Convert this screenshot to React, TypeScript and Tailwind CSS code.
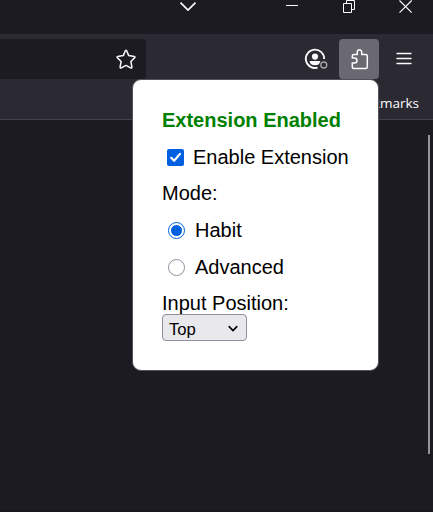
import React from "react";

function TitleBar() {
  return (
    <header className="flex h-[34px] items-start bg-[#1c1b22] text-[#fbfbfe]">
      <svg className="ml-[179px] h-[14px] w-[18px]" viewBox="0 0 18 14" fill="none" stroke="currentColor" strokeWidth="1.7">
        <path d="M1.5 2.7 9 10l7.5-7.3" />
      </svg>
      <svg className="ml-[88px] h-[14px] w-[14px]" viewBox="0 0 14 14" fill="none" stroke="currentColor">
        <path d="M1 5.5h12" />
      </svg>
      <svg className="ml-[43px] h-[14px] w-[14px]" viewBox="0 0 14 14" fill="none" stroke="currentColor">
        <path d="M1.5 3.5h8v9h-8zM4.5 3.5V.5h8v9h-3" />
      </svg>
      <svg className="ml-[42px] h-[14px] w-[15px]" viewBox="0 0 15 14" fill="none" stroke="currentColor" strokeWidth="1.15">
        <path d="M1.5 .5 13.7 12.7M13.7 .5 1.5 12.7" />
      </svg>
    </header>
  );
}

function NavBar() {
  return (
    <nav className="flex h-[50px] items-start bg-[#2b2a33] pt-[5px] text-[#fbfbfe]">
      <div className="flex h-10 w-[146px] items-center justify-end rounded-r bg-[#1c1b22] pr-[10px]">
        <svg className="h-5 w-5" viewBox="0 0 20 20" fill="none" stroke="currentColor" strokeWidth="1.5" strokeLinejoin="round">
          <path d="M9.3 1.8Q10 .6 10.7 1.8L12.7 6.6 18.3 7.4Q19.5 7.7 18.6 8.7L14.9 12.6 15.9 17.8Q16 19.3 14.7 18.8L10 16.4 5.3 18.8Q4 19.3 4.1 17.8L5.1 12.6 1.4 8.7Q.5 7.7 1.7 7.4L7.3 6.6Z" />
        </svg>
      </div>
      <svg className="ml-[158px] mt-[9px] h-[22px] w-6" viewBox="0 0 24 22" fill="none">
        <path d="M20.2 11A9.2 9.2 0 1 0 13.6 19.6" stroke="currentColor" strokeWidth="1.8" />
        <circle cx="11" cy="8.6" r="3.1" fill="currentColor" />
        <path d="M5.7 13h10.6q-.3 4.3-5.3 4.3t-5.3-4.3Z" fill="currentColor" />
        <circle cx="19.8" cy="17" r="4.6" fill="#2b2a33" />
        <circle cx="19.8" cy="17" r="3" stroke="#a5a5aa" strokeWidth="1.3" />
      </svg>
      <div className="ml-[11px] flex h-10 w-10 items-center justify-center rounded bg-[#6a6972]">
        <svg className="h-[22px] w-[22px]" viewBox="0 0 22 22" fill="none" stroke="currentColor" strokeWidth="1.5" strokeLinejoin="round">
          <path d="M4.300 10V8Q4.300 6.500 5.800 6.500H9.300V4a2.200 2.200 0 0 1 4.400 0V6.500h4Q19.300 6.500 19.300 8v10.900q0 1.500-1.500 1.500h-12Q4.300 20.400 4.300 18.900V15h2.200a2.200 2.200 0 0 0 0-5Z" />
        </svg>
      </div>
      <svg className="ml-[17px] mt-[12px] h-4 w-4" viewBox="0 0 16 16" fill="none" stroke="currentColor" strokeWidth="1.4" strokeLinecap="round">
        <path d="M1 2.500h14M1 7.500h14M1 12.500h14" />
      </svg>
    </nav>
  );
}

function Radio({ label, checked = false }: { label: string; checked?: boolean }) {
  return (
    <div role="radio" aria-checked={checked} className="flex h-6 items-center">
      <span
        className={
          checked
            ? "ml-1.5 flex size-[17px] items-center justify-center rounded-full border border-[#0060df]"
            : "ml-1.5 size-[17px] rounded-full border border-[#8f8f9d]"
        }
      >
        {checked && <span className="size-[11px] rounded-full bg-[#0060df]" />}
      </span>
      <span className="ml-[10px]">{label}</span>
    </div>
  );
}

function ExtensionPopup() {
  return (
    <section className="absolute left-[132px] top-[79px] h-[292px] w-[247px] rounded-[9px] border border-[#52525e] bg-white pl-[29px] pt-7 text-[20px] leading-6 text-black">
      <h1 className="whitespace-nowrap font-bold text-[#008000]">Extension Enabled</h1>
      <div role="checkbox" aria-checked="true" className="mt-[13px] flex items-center whitespace-nowrap">
        <span className="ml-[5px] flex size-[17px] items-center justify-center rounded-[2px] bg-[#0060df]">
          <svg className="size-[17px]" viewBox="0 0 17 17" fill="none" stroke="white" strokeWidth="2.2" strokeLinecap="round" strokeLinejoin="round">
            <path d="m4.200 8.800 2.900 3 5.900-6.900" />
          </svg>
        </span>
        <span className="ml-[9px]">Enable Extension</span>
      </div>
      <p className="mt-3">Mode:</p>
      <div className="mt-[13px] flex flex-col gap-[13px]">
        <Radio label="Habit" checked />
        <Radio label="Advanced" />
      </div>
      <p className="mt-3">Input Position:</p>
      <div className="-mt-px flex h-[27px] w-[85px] items-center justify-between rounded border border-[#8f8f9d] bg-[#e9e9ed] pl-[6px] pr-[7px] text-[16.67px]">
        <span className="pt-[5px]">Top</span>
        <svg className="h-2.5 w-3" viewBox="0 0 12 10" fill="none" stroke="black" strokeWidth="1.6" strokeLinecap="round" strokeLinejoin="round">
          <path d="m2.200 3.600 3.800 4 3.800-4" />
        </svg>
      </div>
    </section>
  );
}

export default function App() {
  return (
    <div className="relative flex h-[512px] w-[433px] flex-col overflow-hidden bg-[#1c1b22] font-['Liberation_Sans',Arial,sans-serif]">
      <TitleBar />
      <NavBar />
      <div className="flex h-9 items-center justify-end border-b border-[#42414d] bg-[#2b2a33] pr-[14px] pt-[3px] font-['Open_Sans','Noto_Sans',sans-serif] text-[13.5px] text-[#fbfbfe]">
        <span>Other Bookmarks</span>
      </div>
      <main className="flex flex-1 justify-end border-b border-[#18171d] pr-[3px] pt-[15px]">
        <div className="h-[319px] w-[2px] bg-[#94949a]" />
      </main>
      <ExtensionPopup />
    </div>
  );
}
